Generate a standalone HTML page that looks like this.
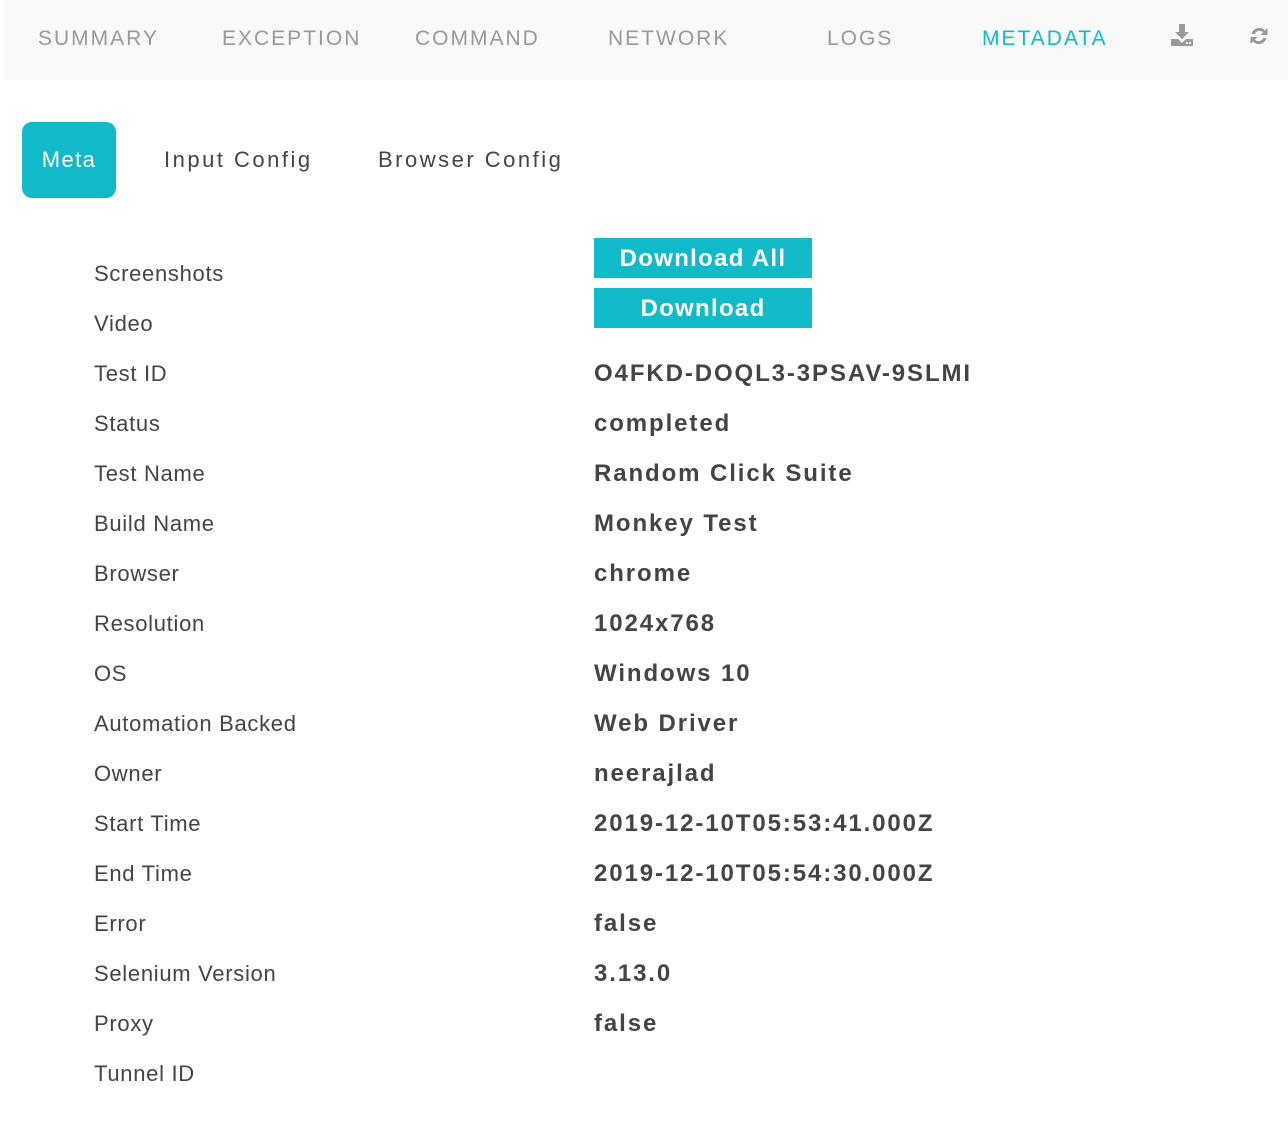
<!DOCTYPE html>
<html><head><meta charset="utf-8"><style>
*{margin:0;padding:0;box-sizing:border-box}
body{width:1288px;height:1144px;background:#fff;font-family:"Liberation Sans",sans-serif;position:relative;overflow:hidden}
.hdr{position:absolute;left:4px;top:0;width:1284px;height:80px;background:#f9f9f9}
.nav{position:absolute;top:27px;font-size:21px;color:#999;letter-spacing:2px;line-height:24px}
.pill{position:absolute;left:22px;top:122px;width:94px;height:76px;background:#10bac8;border-radius:10px;color:#fff;font-size:22px;letter-spacing:1.4px;text-align:center;line-height:76px}
.tab{position:absolute;top:147px;font-size:22px;color:#444;letter-spacing:2.5px;line-height:26px}
.lbl{position:absolute;left:94px;font-size:22px;color:#444;line-height:26px;letter-spacing:0.7px}
.val{position:absolute;left:594px;font-size:24px;font-weight:bold;color:#444;letter-spacing:1.9px;line-height:28px}
.btn{position:absolute;left:594px;width:218px;height:40px;background:#10bac8;color:#fff;font-size:24px;font-weight:bold;letter-spacing:1.3px;text-align:center;line-height:42px}
</style></head><body>
<div class="hdr"></div>
<div class="nav" style="left:38px">SUMMARY</div>
<div class="nav" style="left:222px">EXCEPTION</div>
<div class="nav" style="left:415px">COMMAND</div>
<div class="nav" style="left:608px">NETWORK</div>
<div class="nav" style="left:827px">LOGS</div>
<div class="nav" style="left:982px;color:#10bac8">METADATA</div>
<svg style="position:absolute;left:1170px;top:24px" width="24" height="24" viewBox="0 0 24 24"><path d="M9 0h6v8h4l-7 7-7-7h4z" fill="#999"/><path d="M1 15h7l4 4 4-4h7v7H1z" fill="#999"/><rect x="16" y="18" width="2" height="2" fill="#f9f9f9"/><rect x="19" y="18" width="2" height="2" fill="#f9f9f9"/></svg>
<svg style="position:absolute;left:1247px;top:24px" width="24" height="24" viewBox="0 0 24 24"><path d="M4.5 10A8 8 0 0 1 18 6.5L20.5 4v7h-7l2.6-2.6A5 5 0 0 0 7.8 10z" fill="#999"/><path d="M19.5 14A8 8 0 0 1 6 17.5L3.5 20v-7h7l-2.6 2.6A5 5 0 0 0 16.2 14z" fill="#999"/></svg>
<div class="pill">Meta</div>
<div class="tab" style="left:164px">Input Config</div>
<div class="tab" style="left:378px">Browser Config</div>
<div class="btn" style="top:238px">Download All</div>
<div class="btn" style="top:288px">Download</div>
<div class="lbl" style="top:261px">Screenshots</div>
<div class="lbl" style="top:311px">Video</div>
<div class="lbl" style="top:361px">Test ID</div>
<div class="lbl" style="top:411px">Status</div>
<div class="lbl" style="top:461px">Test Name</div>
<div class="lbl" style="top:511px">Build Name</div>
<div class="lbl" style="top:561px">Browser</div>
<div class="lbl" style="top:611px">Resolution</div>
<div class="lbl" style="top:661px">OS</div>
<div class="lbl" style="top:711px">Automation Backed</div>
<div class="lbl" style="top:761px">Owner</div>
<div class="lbl" style="top:811px">Start Time</div>
<div class="lbl" style="top:861px">End Time</div>
<div class="lbl" style="top:911px">Error</div>
<div class="lbl" style="top:961px">Selenium Version</div>
<div class="lbl" style="top:1011px">Proxy</div>
<div class="lbl" style="top:1061px">Tunnel ID</div>
<div class="val" style="top:360px">O4FKD-DOQL3-3PSAV-9SLMI</div>
<div class="val" style="top:410px">completed</div>
<div class="val" style="top:460px">Random Click Suite</div>
<div class="val" style="top:510px">Monkey Test</div>
<div class="val" style="top:560px">chrome</div>
<div class="val" style="top:610px">1024x768</div>
<div class="val" style="top:660px">Windows 10</div>
<div class="val" style="top:710px">Web Driver</div>
<div class="val" style="top:760px">neerajlad</div>
<div class="val" style="top:810px">2019-12-10T05:53:41.000Z</div>
<div class="val" style="top:860px">2019-12-10T05:54:30.000Z</div>
<div class="val" style="top:910px">false</div>
<div class="val" style="top:960px">3.13.0</div>
<div class="val" style="top:1010px">false</div>
</body></html>
